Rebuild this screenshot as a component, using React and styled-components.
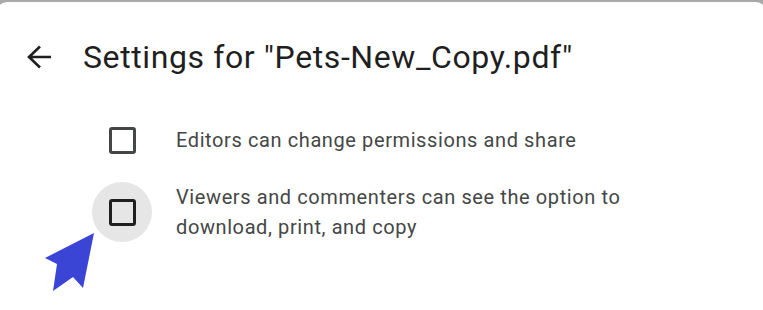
import React from "react";
import styled, { createGlobalStyle } from "styled-components";

const Global = createGlobalStyle`
  html, body { margin: 0; padding: 0; }
  body {
    background: #a9a9a9;
    overflow: hidden;
    font-family: Roboto, "Noto Sans", Arial, sans-serif;
  }
`;

const Page = styled.div`
  position: relative;
  width: 763px;
  height: 310px;
  overflow: hidden;
`;

const Card = styled.div`
  margin: 2px -3px 0 -3px;
  height: 308px;
  background: #ffffff;
  border-radius: 10px 10px 0 0;
  box-sizing: border-box;
  padding: 36px 0 0 30px;
`;

const Header = styled.div`
  display: flex;
  align-items: center;
  gap: 31px;
  height: 38px;
`;

const BackButton = styled.button`
  display: flex;
  align-items: center;
  justify-content: center;
  width: 25px;
  height: 25px;
  padding: 0;
  border: none;
  background: transparent;
  color: #1f1f1f;
  margin-top: -1px;
`;

const Title = styled.h1`
  margin: 0;
  font-size: 32px;
  line-height: 38px;
  font-weight: 400;
  color: #1f1f1f;
  letter-spacing: 0.6px;
`;

const Options = styled.div`
  display: flex;
  flex-direction: column;
  gap: 12px;
  margin-top: 34px;
  padding-left: 65px;
`;

const Row = styled.label`
  display: grid;
  grid-template-columns: 60px 1fr;
  column-gap: 24px;
  align-items: center;
`;

const Ripple = styled.span`
  width: 60px;
  height: 60px;
  border-radius: 50%;
  display: flex;
  align-items: center;
  justify-content: center;
  background: ${(p) => (p.$hover ? "#e6e6e6" : "transparent")};
`;

const Box = styled.span`
  width: 27px;
  height: 27px;
  box-sizing: border-box;
  border: 3px solid ${(p) => (p.$hover ? "#1f1f1f" : "#444746")};
  border-radius: 3px;
`;

const Label = styled.span`
  font-size: 20px;
  line-height: 30px;
  color: #444746;
  letter-spacing: 0.6px;
`;

const Pointer = styled.svg`
  position: absolute;
  left: 40px;
  top: 228px;
`;

export default function App() {
  return (
    <Page>
      <Global />
      <Card>
        <Header>
          <BackButton aria-label="Back">
            <svg width="25" height="24" viewBox="0 0 25 24" fill="none">
              <path
                d="M24 12H2M13 1.5L2 12l11 10.5"
                stroke="currentColor"
                strokeWidth="2.6"
                strokeLinejoin="miter"
              />
            </svg>
          </BackButton>
          <Title>Settings for "Pets-New_Copy.pdf"</Title>
        </Header>
        <Options>
          <Row>
            <Ripple>
              <Box />
            </Ripple>
            <Label>Editors can change permissions and share</Label>
          </Row>
          <Row>
            <Ripple $hover>
              <Box $hover />
            </Ripple>
            <Label>
              Viewers and commenters can see the option to
              <br />
              download, print, and copy
            </Label>
          </Row>
        </Options>
      </Card>
      <Pointer width="60" height="70" viewBox="40 228 60 70">
        <polygon
          points="94,233 45,258 57,264 53,291 73,277 83,288"
          fill="#3a45d6"
        />
      </Pointer>
    </Page>
  );
}
